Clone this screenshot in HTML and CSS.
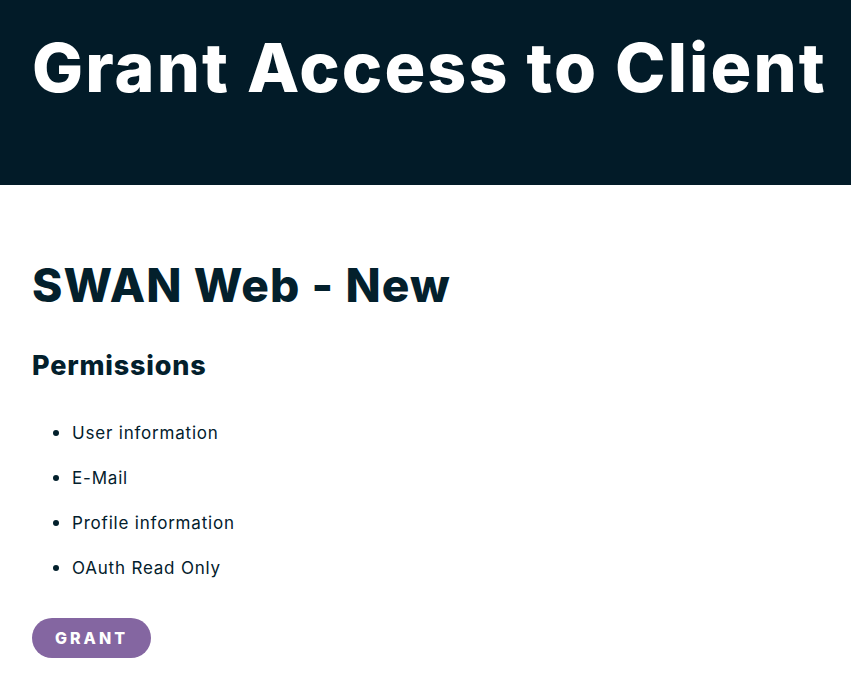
FILE: index.html
```html
<!DOCTYPE html>
<html>
<head>
<meta charset="utf-8">
<link rel="stylesheet" href="styles.css">
</head>
<body>
<header class="banner">
  <h1 class="banner-title">Grant Access to Client</h1>
</header>
<main class="content">
  <h2 class="client-name">SWAN Web - New</h2>
  <h3 class="section-title">Permissions</h3>
  <ul class="perm-list">
    <li>User information</li>
    <li>E-Mail</li>
    <li>Profile information</li>
    <li>OAuth Read Only</li>
  </ul>
  <button class="grant-btn">GRANT</button>
</main>
</body>
</html>
```
FILE: styles.css
```css
html, body {
  margin: 0;
  padding: 0;
  background: #ffffff;
  font-family: "Inter", "Noto Sans", sans-serif;
  color: #03202c;
}
.banner {
  background: #021b28;
  height: 185px;
  padding: 0 32px;
  box-sizing: border-box;
  overflow: hidden;
}
.banner-title {
  margin: 0;
  padding-top: 26px;
  font-size: 68px;
  line-height: 82px;
  font-weight: 800;
  letter-spacing: 2.1px;
  color: #ffffff;
  white-space: nowrap;
}
.content {
  padding: 71px 32px 30px;
}
.client-name {
  margin: 0;
  font-size: 46px;
  line-height: 58px;
  font-weight: 800;
  letter-spacing: 1.1px;
}
.section-title {
  margin: 34px 0 0;
  font-size: 27px;
  line-height: 36px;
  font-weight: 800;
  letter-spacing: 0.8px;
}
.perm-list {
  margin: 36px 0 0;
  padding-left: 40px;
  font-size: 17px;
  line-height: 24px;
  letter-spacing: 0.8px;
}
.perm-list li {
  margin-bottom: 21px;
}
.perm-list li + li {
  margin-top: -1px;
}
.perm-list li::marker {
  font-size: 20px;
}
.grant-btn {
  margin-top: 17px;
  width: 119px;
  height: 40px;
  border: none;
  border-radius: 20px;
  background: #8466a1;
  color: #ffffff;
  font-family: "Inter", "Noto Sans", sans-serif;
  font-weight: 800;
  font-size: 16px;
  letter-spacing: 3px;
  padding: 0;
}
```
